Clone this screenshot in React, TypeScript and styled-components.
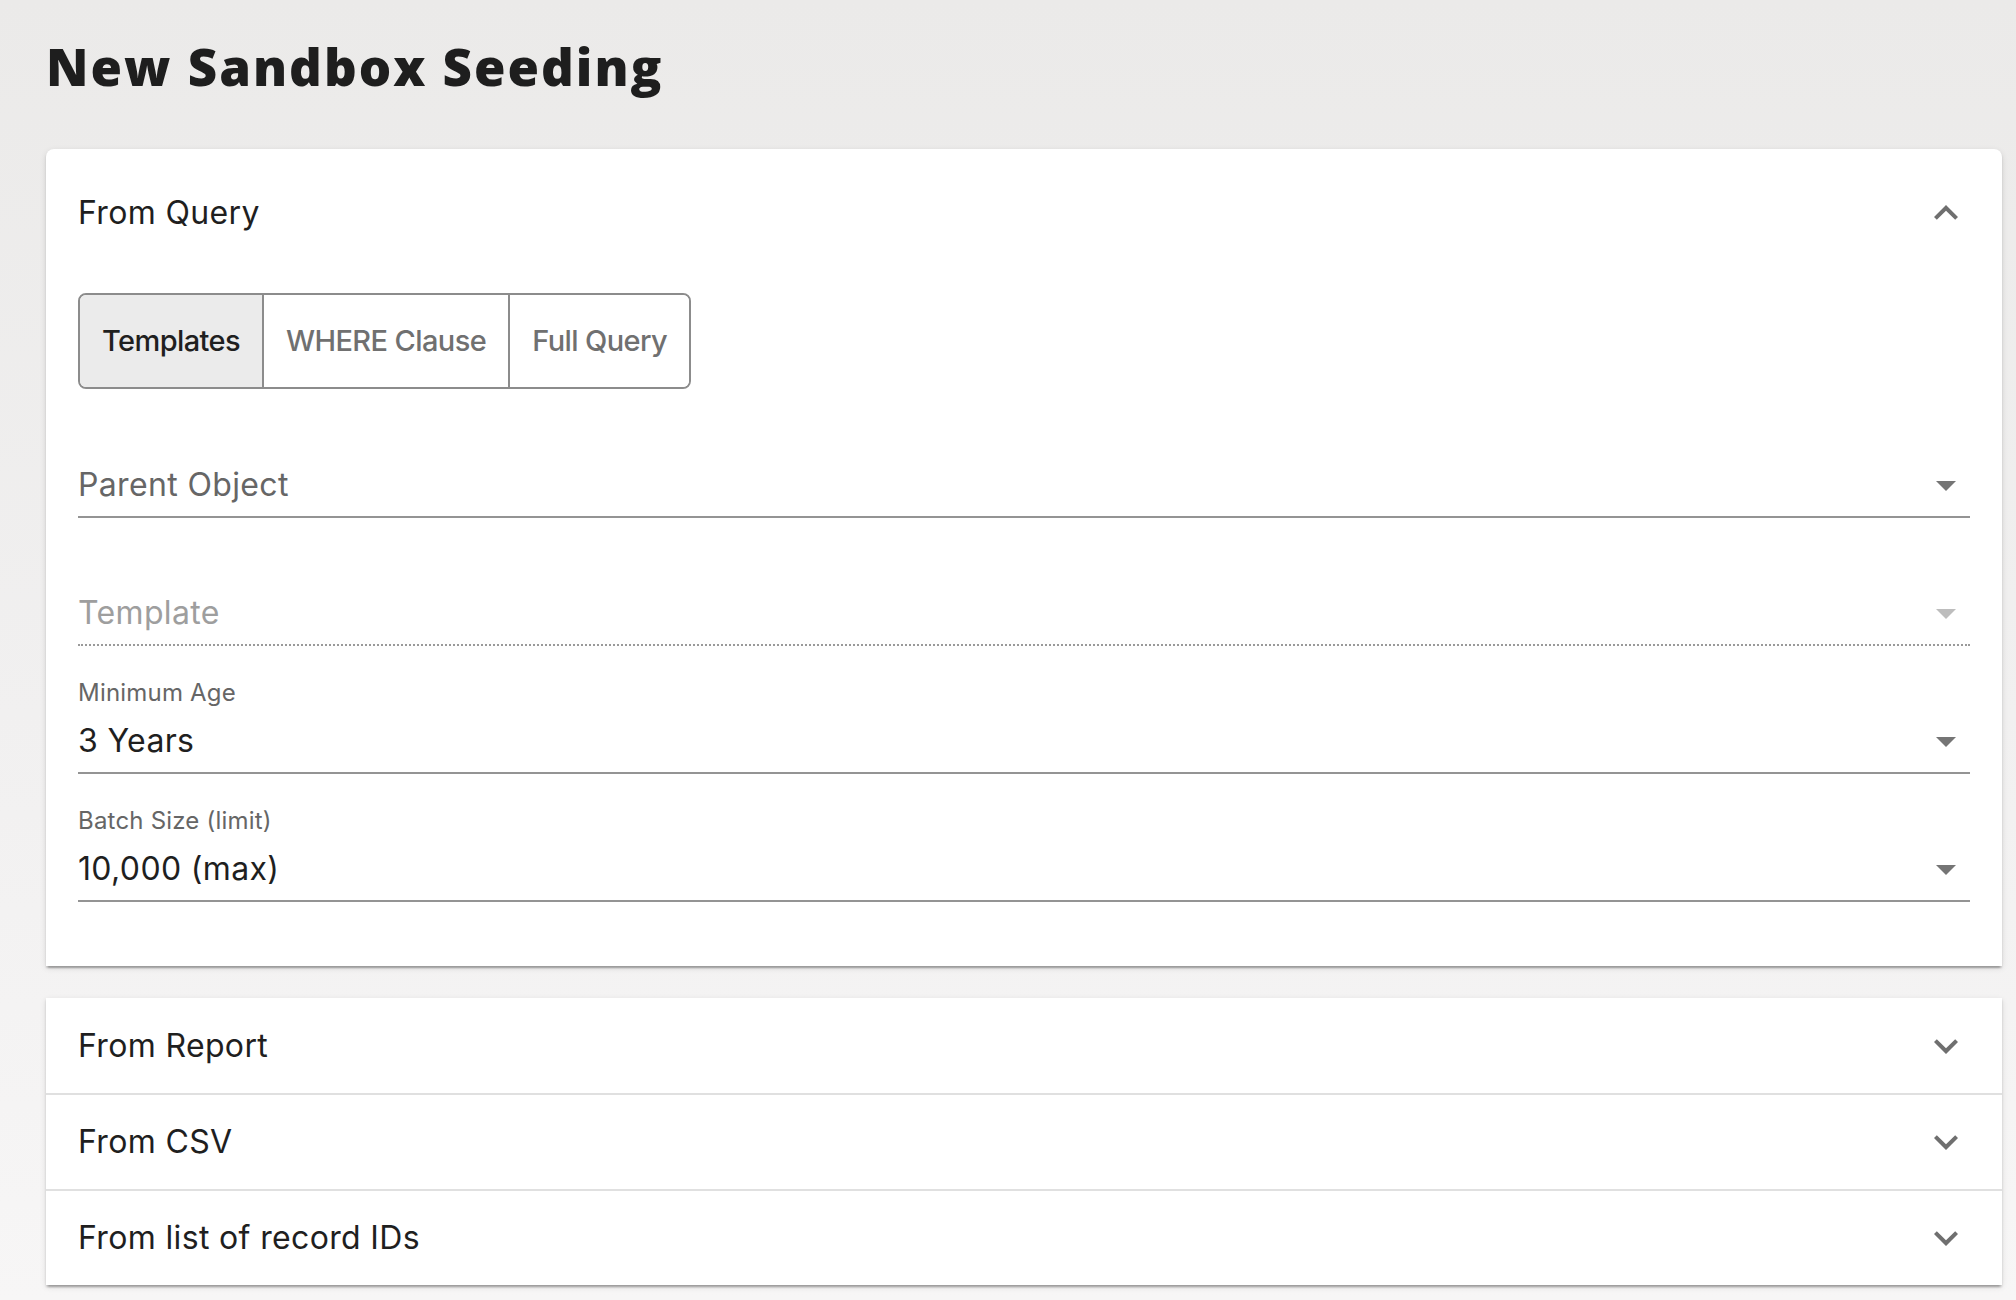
import React from "react";
import styled, { createGlobalStyle, css } from "styled-components";

const GlobalStyle = createGlobalStyle`
  html, body {
    margin: 0;
    padding: 0;
  }
  body {
    background: linear-gradient(180deg, #ebeae9 0%, #f1f0f0 55%, #f7f6f6 100%);
    min-height: 100vh;
    font-family: Inter, "Noto Sans", sans-serif;
    color: #1f1f1f;
  }
  * { box-sizing: border-box; }
`;

const Page = styled.div`
  min-height: 100vh;
  padding: 36px 14px 0 46px;
`;

const Title = styled.h1`
  margin: 0 0 53px 0;
  font-family: "Open Sans", "Liberation Sans", sans-serif;
  font-weight: 800;
  font-size: 51px;
  line-height: 60px;
  letter-spacing: 2px;
  color: #1e1e1e;
`;

const Card = styled.section<{ $rounded?: boolean }>`
  background: #ffffff;
  border-radius: ${(p) => (p.$rounded ? "8px 8px 0 0" : "0")};
  box-shadow: 0 4px 2px -2px rgba(0, 0, 0, 0.2), 0 2px 2px 0 rgba(0, 0, 0, 0.14),
    0 2px 6px 0 rgba(0, 0, 0, 0.12);
`;

const CardGroup = styled(Card)`
  margin-top: 32px;
`;

const Summary = styled.div<{ $expanded?: boolean; $divider?: boolean }>`
  display: flex;
  align-items: center;
  justify-content: space-between;
  padding: 0 32px 0 32px;
  height: ${(p) => (p.$expanded ? "128px" : "96px")};
  ${(p) =>
    p.$divider &&
    css`
      border-top: 2px solid #e0e0e0;
    `}
  &:first-child {
    height: ${(p) => (p.$expanded ? "128px" : "95px")};
  }
`;

const SummaryTitle = styled.span`
  font-size: 32px;
  line-height: 32px;
  font-weight: 400;
  letter-spacing: 0.35px;
  color: #1f1f1f;
`;

const IconBox = styled.span<{ $up?: boolean }>`
  width: 48px;
  height: 48px;
  display: flex;
  align-items: center;
  justify-content: center;
  transform: ${(p) => (p.$up ? "rotate(180deg)" : "none")};
  svg {
    width: 48px;
    height: 48px;
    fill: #6f6f6f;
  }
`;

const Details = styled.div`
  padding: 16px 32px 64px 32px;
`;

const ToggleGroup = styled.div`
  display: inline-flex;
  border: 2px solid #8c8c8c;
  border-radius: 8px;
  overflow: hidden;
`;

const ToggleButton = styled.button<{ $selected?: boolean }>`
  height: 92px;
  padding: 0 22px;
  border: none;
  border-left: 2px solid #8c8c8c;
  &:first-child {
    border-left: none;
  }
  background: ${(p) => (p.$selected ? "#ebebeb" : "#ffffff")};
  color: ${(p) => (p.$selected ? "#1f1f1f" : "#707070")};
  font-family: Inter, "Noto Sans", sans-serif;
  font-size: 29px;
  font-weight: 500;
  letter-spacing: -0.6px;
  line-height: 30px;
  cursor: pointer;
`;

const Fields = styled.div`
  display: flex;
  flex-direction: column;
  gap: 34px;
  margin-top: 35px;
`;

const Field = styled.div`
  display: flex;
  flex-direction: column;
  padding-top: 1px;
`;

const FieldLabel = styled.label`
  height: 24px;
  font-size: 24px;
  line-height: 24px;
  letter-spacing: 0.2px;
  color: #666666;
  margin-bottom: 20px;
`;

const InputRow = styled.div<{ $disabled?: boolean }>`
  display: flex;
  align-items: center;
  justify-content: space-between;
  padding-bottom: 15px;
  border-bottom: 2px ${(p) => (p.$disabled ? "dotted #9a9a9a" : "solid #949494")};
`;

const Value = styled.span<{ $tone: "value" | "placeholder" | "disabled" }>`
  font-size: 32px;
  line-height: 32px;
  letter-spacing: 0.35px;
  color: ${(p) =>
    p.$tone === "value" ? "#1f1f1f" : p.$tone === "placeholder" ? "#666666" : "#9e9e9e"};
`;

const ArrowBox = styled.span<{ $disabled?: boolean }>`
  width: 48px;
  height: 48px;
  margin: -8px 0;
  display: flex;
  svg {
    width: 48px;
    height: 48px;
    fill: ${(p) => (p.$disabled ? "#bdbdbd" : "#757575")};
  }
`;

const ExpandIcon = ({ up }: { up?: boolean }) => (
  <IconBox $up={up}>
    <svg viewBox="0 0 24 24">
      <path d="M16.59 8.59 12 13.17 7.41 8.59 6 10l6 6 6-6z" />
    </svg>
  </IconBox>
);

const DropArrow = ({ disabled }: { disabled?: boolean }) => (
  <ArrowBox $disabled={disabled}>
    <svg viewBox="0 0 24 24">
      <path d="M7 10l5 5 5-5z" />
    </svg>
  </ArrowBox>
);

type FieldDef = {
  label?: string;
  value: string;
  tone: "value" | "placeholder" | "disabled";
};

const fields: FieldDef[] = [
  { value: "Parent Object", tone: "placeholder" },
  { value: "Template", tone: "disabled" },
  { label: "Minimum Age", value: "3 Years", tone: "value" },
  { label: "Batch Size (limit)", value: "10,000 (max)", tone: "value" },
];

const SelectField = ({ label, value, tone }: FieldDef) => (
  <Field>
    <FieldLabel>{label ?? ""}</FieldLabel>
    <InputRow $disabled={tone === "disabled"}>
      <Value $tone={tone}>{value}</Value>
      <DropArrow disabled={tone === "disabled"} />
    </InputRow>
  </Field>
);

const collapsed = ["From Report", "From CSV", "From list of record IDs"];

export default function App() {
  return (
    <>
      <GlobalStyle />
      <Page>
        <Title>New Sandbox Seeding</Title>
        <Card $rounded>
          <Summary $expanded>
            <SummaryTitle>From Query</SummaryTitle>
            <ExpandIcon up />
          </Summary>
          <Details>
            <ToggleGroup>
              <ToggleButton $selected>Templates</ToggleButton>
              <ToggleButton>WHERE Clause</ToggleButton>
              <ToggleButton>Full Query</ToggleButton>
            </ToggleGroup>
            <Fields>
              {fields.map((f) => (
                <SelectField key={f.value} {...f} />
              ))}
            </Fields>
          </Details>
        </Card>
        <CardGroup>
          {collapsed.map((t, i) => (
            <Summary key={t} $divider={i > 0}>
              <SummaryTitle>{t}</SummaryTitle>
              <ExpandIcon />
            </Summary>
          ))}
        </CardGroup>
      </Page>
    </>
  );
}
